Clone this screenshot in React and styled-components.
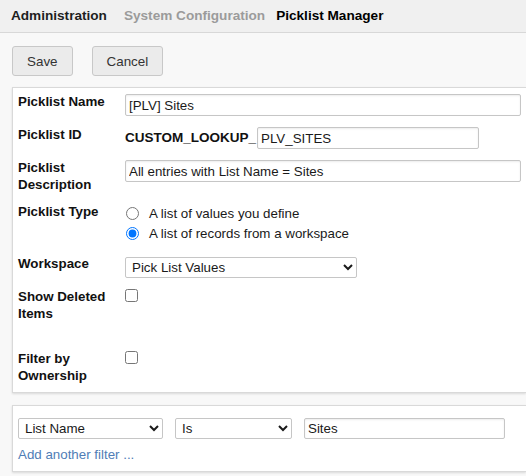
import React, { useState } from "react";
import styled, { createGlobalStyle } from "styled-components";

const GlobalStyle = createGlobalStyle`
  html, body {
    margin: 0;
    padding: 0;
    background: #f8f8f8;
    font-family: "Liberation Sans", Arial, sans-serif;
    font-size: 13.33px;
    color: #111;
  }
`;

const Page = styled.div`
  min-height: 476px;
  overflow: hidden;
`;

const Breadcrumbs = styled.div`
  display: flex;
  align-items: center;
  height: 33px;
  padding-left: 11px;
  padding-bottom: 1px;
  box-sizing: border-box;
  background: #f0f0f0;
  border-bottom: 1px solid #d8d8d8;
`;

const Crumb = styled.span`
  font-weight: bold;
  font-size: 13.6px;
  margin-right: ${(p) => (p.$muted ? "11px" : "17px")};
  color: ${(p) => (p.$muted ? "#9b9b9b" : p.$current ? "#000" : "#1e1e1e")};
`;

const Toolbar = styled.div`
  display: flex;
  gap: 19px;
  padding: 13px 12px 11px;
`;

const Button = styled.button`
  height: 30px;
  padding: 0 14px;
  font-family: inherit;
  font-size: 13.4px;
  color: #333;
  background: #ebebeb;
  border: 1px solid #c8c8c8;
  border-radius: 3px;
  cursor: pointer;
`;

const Panel = styled.div`
  margin-left: 12px;
  margin-bottom: 12px;
  padding: ${(p) => p.$pad || "6px 0 8px 5px"};
  background: #fff;
  border: 1px solid #d9d9d9;
  border-right: none;
  box-shadow: 0 1px 2px rgba(0, 0, 0, 0.12);
`;

const FormGrid = styled.div`
  display: grid;
  grid-template-columns: 107px 1fr;
  row-gap: 11px;
  align-items: start;
`;

const Label = styled.div`
  font-weight: bold;
  line-height: 17px;
  margin-top: -1px;
  min-height: ${(p) => p.$minHeight || "auto"};
  padding-right: 6px;
`;

const Field = styled.div`
  display: flex;
  align-items: center;
  min-height: 22px;
`;

const TextInput = styled.input`
  box-sizing: border-box;
  width: ${(p) => p.$width}px;
  height: ${(p) => p.$height || 22}px;
  padding: 0 3px;
  font-family: inherit;
  font-size: 13.33px;
  color: #1a1a1a;
  background: #fff;
  border: 1px solid #c6c6c6;
  border-radius: 2px;
  box-shadow: inset 0 1px 2px rgba(0, 0, 0, 0.08);
  outline: none;
`;

const Prefix = styled.span`
  font-weight: bold;
  font-size: 13.5px;
  margin-top: -2px;
  margin-right: 1px;
`;

const Select = styled.select`
  box-sizing: border-box;
  width: ${(p) => p.$width}px;
  height: 21px;
  padding: 0 2px;
  font-family: inherit;
  font-size: 13.33px;
  color: #1a1a1a;
  background: #fff;
  border: 1px solid #c6c6c6;
  border-radius: 2px;
  outline: none;
`;

const RadioList = styled.div`
  display: flex;
  flex-direction: column;
  gap: 1px;
  margin-bottom: 2px;
`;

const Choice = styled.label`
  display: flex;
  align-items: center;
  gap: 10px;
  height: 19px;
  color: #1a1a1a;

  input {
    margin: 0 0 0 1px;
    width: 13px;
    height: 13px;
  }
`;

const Check = styled.input`
  margin: 0;
  width: 13px;
  height: 13px;
`;

const FilterRow = styled.div`
  display: flex;
  gap: 12px;
  align-items: center;
`;

const AddLink = styled.a`
  display: block;
  margin-top: 7px;
  line-height: 17px;
  color: #4f7db6;
  text-decoration: none;
  cursor: pointer;
`;

const App = () => {
  const [type, setType] = useState("records");

  return (
    <Page>
      <GlobalStyle />
      <Breadcrumbs>
        <Crumb>Administration</Crumb>
        <Crumb $muted>System Configuration</Crumb>
        <Crumb $current>Picklist Manager</Crumb>
      </Breadcrumbs>

      <Toolbar>
        <Button>Save</Button>
        <Button>Cancel</Button>
      </Toolbar>

      <Panel>
        <FormGrid>
          <Label>Picklist Name</Label>
          <Field>
            <TextInput $width={396} defaultValue="[PLV] Sites" />
          </Field>

          <Label>Picklist ID</Label>
          <Field>
            <Prefix>CUSTOM_LOOKUP_</Prefix>
            <TextInput $width={222} defaultValue="PLV_SITES" />
          </Field>

          <Label>
            Picklist
            <br />
            Description
          </Label>
          <Field>
            <TextInput
              $width={396}
              defaultValue="All entries with List Name = Sites"
            />
          </Field>

          <Label>Picklist Type</Label>
          <RadioList>
            <Choice>
              <input
                type="radio"
                name="type"
                checked={type === "values"}
                onChange={() => setType("values")}
              />
              A list of values you define
            </Choice>
            <Choice>
              <input
                type="radio"
                name="type"
                checked={type === "records"}
                onChange={() => setType("records")}
              />
              A list of records from a workspace
            </Choice>
          </RadioList>

          <Label>Workspace</Label>
          <Field>
            <Select $width={232} defaultValue="plv">
              <option value="plv">Pick List Values</option>
            </Select>
          </Field>

          <Label $minHeight="52px">
            Show Deleted
            <br />
            Items
          </Label>
          <div>
            <Check type="checkbox" />
          </div>

          <Label>
            Filter by
            <br />
            Ownership
          </Label>
          <div>
            <Check type="checkbox" />
          </div>
        </FormGrid>
      </Panel>

      <Panel $pad="12px 0 8px 5px">
        <FilterRow>
          <Select $width={145} defaultValue="list">
            <option value="list">List Name</option>
          </Select>
          <Select $width={117} defaultValue="is">
            <option value="is">Is</option>
          </Select>
          <TextInput $width={201} $height={21} defaultValue="Sites" />
        </FilterRow>
        <AddLink>Add another filter ...</AddLink>
      </Panel>
    </Page>
  );
};

export default App;
